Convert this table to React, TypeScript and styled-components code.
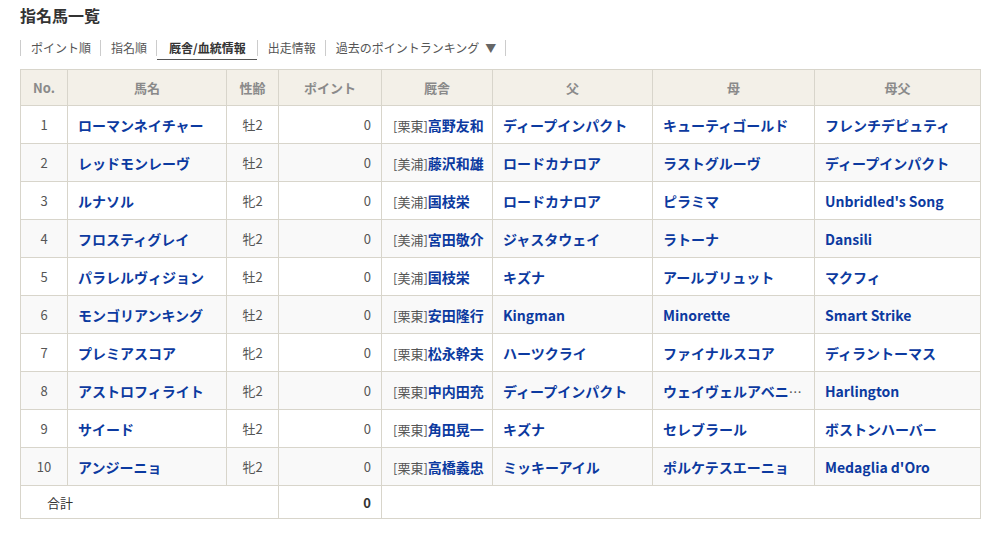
import React from "react";
import styled, { createGlobalStyle } from "styled-components";

const Global = createGlobalStyle`
  html, body { margin: 0; padding: 0; background: #fff; }
  body { font-family: "Noto Sans CJK JP", "Noto Sans", sans-serif; color: #333; }
  * { box-sizing: border-box; }
`;

const Page = styled.div`
  padding: 4px 20px 0 20px;
  width: 1001px;
`;

const Title = styled.h2`
  margin: 0;
  font-size: 16px;
  line-height: 22px;
  font-weight: bold;
  color: #333;
`;

const Tabs = styled.ul`
  list-style: none;
  display: flex;
  margin: 14px 0 0 0;
  padding: 0;
  border-left: 1px solid #ccc;
  width: max-content;
`;

const Tab = styled.li<{ $active?: boolean }>`
  position: relative;
  padding: ${(p) => (p.$active ? "0 11px 0 12px" : "0 9px 0 10px")};
  font-size: 12px;
  line-height: 16px;
  height: 16px;
  border-right: 1px solid #ccc;
  color: ${(p) => (p.$active ? "#333" : "#555")};
  font-weight: ${(p) => (p.$active ? "bold" : "normal")};
  white-space: nowrap;
  &::after {
    content: "";
    display: ${(p) => (p.$active ? "block" : "none")};
    position: absolute;
    left: 0;
    right: 0;
    bottom: -4px;
    height: 1px;
    background: #555;
  }
`;

const Caret = styled.span`
  margin-left: 6px;
  color: #666;
  font-size: 11px;
`;

const Table = styled.table`
  margin-top: 13px;
  width: 960px;
  border-collapse: collapse;
  table-layout: fixed;
  font-size: 13px;
`;

const Th = styled.th`
  height: 36px;
  padding: 0;
  background: #f3f0e8;
  border: 1px solid #d8d5cb;
  color: #8a8a8a;
  font-weight: bold;
  font-size: 13px;
  text-align: center;
`;

const Row = styled.tr<{ $even?: boolean }>`
  background: ${(p) => (p.$even ? "#f9f9f9" : "#fff")};
`;

const Td = styled.td<{ $align?: string; $tight?: boolean }>`
  height: 38px;
  padding: ${(p) => (p.$tight ? "0 0 0 11px" : "0 10px")};
  border: 1px solid #d8d5cb;
  color: #555;
  font-size: 13px;
  text-align: ${(p) => p.$align || "left"};
  white-space: nowrap;
  overflow: hidden;
  text-overflow: ${(p) => (p.$tight ? "clip" : "ellipsis")};
`;

const TotalTd = styled.td<{ $align?: string; $noRight?: boolean }>`
  height: 33px;
  padding: 0 10px 0 26px;
  border: 1px solid #d8d5cb;
  border-right: ${(p) => (p.$noRight ? "none" : "1px solid #d8d5cb")};
  color: #333;
  font-size: 13px;
  text-align: ${(p) => p.$align || "left"};
`;

const Sum = styled.span`
  font-weight: bold;
`;

const Link = styled.a`
  color: #0c3aa0;
  font-weight: bold;
  font-size: 14px;
  text-decoration: none;
`;

const Stable = styled.span`
  color: #555;
  font-size: 13px;
`;

type Horse = {
  name: string;
  sex: string;
  stable: string;
  trainer: string;
  sire: string;
  dam: string;
  bms: string;
};

const horses: Horse[] = [
  { name: "ローマンネイチャー", sex: "牡2", stable: "栗東", trainer: "高野友和", sire: "ディープインパクト", dam: "キューティゴールド", bms: "フレンチデピュティ" },
  { name: "レッドモンレーヴ", sex: "牡2", stable: "美浦", trainer: "藤沢和雄", sire: "ロードカナロア", dam: "ラストグルーヴ", bms: "ディープインパクト" },
  { name: "ルナソル", sex: "牝2", stable: "美浦", trainer: "国枝栄", sire: "ロードカナロア", dam: "ピラミマ", bms: "Unbridled's Song" },
  { name: "フロスティグレイ", sex: "牝2", stable: "美浦", trainer: "宮田敬介", sire: "ジャスタウェイ", dam: "ラトーナ", bms: "Dansili" },
  { name: "パラレルヴィジョン", sex: "牡2", stable: "美浦", trainer: "国枝栄", sire: "キズナ", dam: "アールブリュット", bms: "マクフィ" },
  { name: "モンゴリアンキング", sex: "牡2", stable: "栗東", trainer: "安田隆行", sire: "Kingman", dam: "Minorette", bms: "Smart Strike" },
  { name: "プレミアスコア", sex: "牝2", stable: "栗東", trainer: "松永幹夫", sire: "ハーツクライ", dam: "ファイナルスコア", bms: "ディラントーマス" },
  { name: "アストロフィライト", sex: "牝2", stable: "栗東", trainer: "中内田充", sire: "ディープインパクト", dam: "ウェイヴェルアベニュー", bms: "Harlington" },
  { name: "サイード", sex: "牡2", stable: "栗東", trainer: "角田晃一", sire: "キズナ", dam: "セレブラール", bms: "ボストンハーバー" },
  { name: "アンジーニョ", sex: "牝2", stable: "栗東", trainer: "高橋義忠", sire: "ミッキーアイル", dam: "ポルケテスエーニョ", bms: "Medaglia d'Oro" },
];

const widths = [47, 159, 52, 103, 111, 160, 162, 166];

export default function App() {
  return (
    <>
      <Global />
      <Page>
        <Title>指名馬一覧</Title>
        <Tabs>
          <Tab>ポイント順</Tab>
          <Tab>指名順</Tab>
          <Tab $active>厩舎/血統情報</Tab>
          <Tab>出走情報</Tab>
          <Tab>
            過去のポイントランキング<Caret>▼</Caret>
          </Tab>
        </Tabs>
        <Table>
          <colgroup>
            {widths.map((w, i) => (
              <col key={i} style={{ width: w }} />
            ))}
          </colgroup>
          <thead>
            <tr>
              <Th>No.</Th>
              <Th>馬名</Th>
              <Th>性齢</Th>
              <Th>ポイント</Th>
              <Th>厩舎</Th>
              <Th>父</Th>
              <Th>母</Th>
              <Th>母父</Th>
            </tr>
          </thead>
          <tbody>
            {horses.map((h, i) => (
              <Row key={i} $even={i % 2 === 1}>
                <Td $align="center">{i + 1}</Td>
                <Td><Link href="#">{h.name}</Link></Td>
                <Td $align="center">{h.sex}</Td>
                <Td $align="right">0</Td>
                <Td $tight>
                  <Stable>[{h.stable}]</Stable>
                  <Link href="#">{h.trainer}</Link>
                </Td>
                <Td><Link href="#">{h.sire}</Link></Td>
                <Td><Link href="#">{h.dam}</Link></Td>
                <Td><Link href="#">{h.bms}</Link></Td>
              </Row>
            ))}
            <tr>
              <TotalTd colSpan={3}>合計</TotalTd>
              <TotalTd $align="right" $noRight style={{ paddingRight: 10 }}>
                <Sum>0</Sum>
              </TotalTd>
              <TotalTd colSpan={4} />
            </tr>
          </tbody>
        </Table>
      </Page>
    </>
  );
}
